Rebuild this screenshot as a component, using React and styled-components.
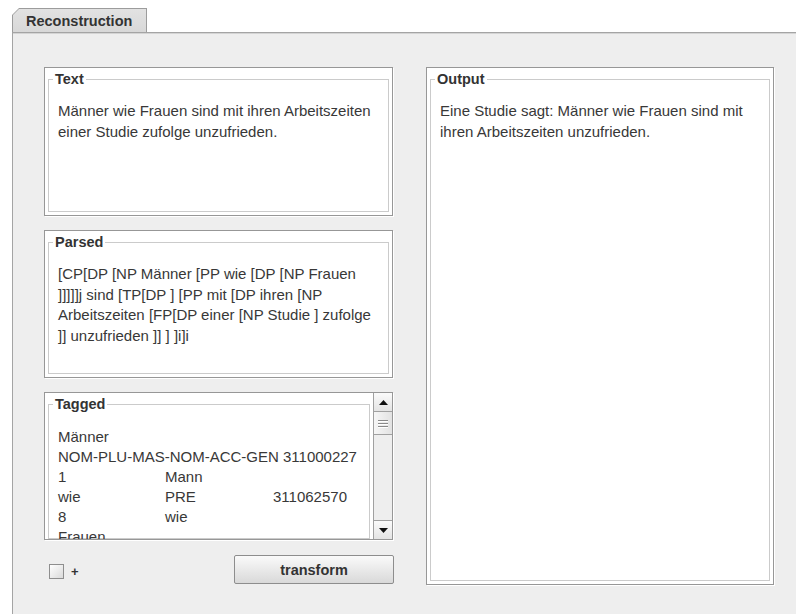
import React from "react";
import styled, { createGlobalStyle } from "styled-components";

const Global = createGlobalStyle`
  html, body { margin: 0; padding: 0; background: #ffffff; }
  body { font-family: "Liberation Sans", Arial, sans-serif; color: #333; }
  * { box-sizing: border-box; }
`;

const Window = styled.div`
  width: 796px;
  height: 614px;
  display: flex;
  flex-direction: column;
  overflow: hidden;
`;

const TabStrip = styled.div`
  height: 32px;
  display: flex;
  align-items: flex-end;
  padding-left: 12px;
`;

/* outer layer paints the tab outline, inner layer the fill; both share the chamfered corner */
const TabEdge = styled.div`
  width: 135px;
  height: 24px;
  background: #9c9c9c;
  clip-path: polygon(0 7px, 7px 0, 100% 0, 100% 100%, 0 100%);
  padding: 1px 1px 0 1px;
`;

const TabFace = styled.div`
  height: 100%;
  background: linear-gradient(#e2e2e2, #d8d8d8);
  clip-path: polygon(0 6px, 6px 0, 100% 0, 100% 100%, 0 100%);
  display: flex;
  align-items: center;
  padding-left: 13px;
  font-weight: bold;
  font-size: 14.5px;
  color: #333;
`;

const Panel = styled.div`
  flex: 1;
  margin-left: 12px;
  background: #eeeeee;
  border-top: 1px solid #a4a4a4;
  border-left: 1px solid #a4a4a4;
  box-shadow: inset 0 1px 0 #d4d4d4;
  padding: 34px 0 0 31px;
  display: flex;
  gap: 33px;
`;

const LeftColumn = styled.div`
  width: 349px;
  display: grid;
  grid-template-rows: 149px 148px 148px 29px;
  row-gap: 14px;
`;

const RightColumn = styled.div`
  width: 348px;
  height: 518px;
  display: flex;
`;

const Sunken = styled.div`
  flex: 1;
  min-width: 0;
  height: 100%;
  background: #fff;
  border: 1px solid #979797;
  box-shadow: 1px 1px 0 #ffffff;
  display: flex;
  overflow: hidden;
`;

const Group = styled.fieldset`
  flex: 1;
  min-width: 0;
  margin: 3px 3px ${(p) => (p.$open ? "0" : "3px")} 3px;
  border: 1px solid #cbcbcb;
  padding: 0 0 0 9px;
  align-self: stretch;
`;

const Caption = styled.legend`
  margin-left: -5px;
  padding: 0 2px;
  font-weight: bold;
  font-size: 14.5px;
  line-height: 16px;
  color: #333;
`;

const Body = styled.div`
  padding-top: ${(p) => (p.$tight ? "14.5px" : "14px")};
  font-size: 15px;
  line-height: ${(p) => (p.$tight ? "20px" : "20.5px")};
  color: #383838;
  white-space: nowrap;
`;

const Line = styled.div``;

const Viewport = styled.div`
  flex: 1;
  min-width: 0;
  overflow: hidden;
  display: flex;
`;

const Cols = styled.div`
  display: grid;
  grid-template-columns: 107px 108px auto;
`;

const ScrollBar = styled.div`
  width: 19px;
  border-left: 1px solid #a0a0a0;
  display: flex;
  flex-direction: column;
  background: #eeeeee;
`;

const ArrowButton = styled.div`
  height: 19px;
  display: flex;
  align-items: center;
  justify-content: center;
  background: linear-gradient(#fbfbfb, #e4e4e4);
  border-bottom: ${(p) => (p.$down ? "none" : "1px solid #a0a0a0")};
  border-top: ${(p) => (p.$down ? "1px solid #a0a0a0" : "none")};
`;

const Thumb = styled.div`
  height: 23px;
  border-bottom: 1px solid #a0a0a0;
  background: linear-gradient(90deg, #f6f6f6, #e2e2e2);
  display: flex;
  flex-direction: column;
  align-items: center;
  justify-content: center;
  gap: 2px;
`;

const Grip = styled.span`
  width: 10px;
  height: 1px;
  background: #8a8a8a;
  box-shadow: 0 1px 0 #ffffff;
`;

const Track = styled.div`
  flex: 1;
  background: #eeeeee;
`;

const ActionRow = styled.div`
  margin-top: 2px;
  display: flex;
  align-items: center;
  justify-content: space-between;
`;

const CheckLabel = styled.label`
  display: flex;
  align-items: center;
  margin-left: 5px;
  margin-top: 3px;
  font-weight: bold;
  font-size: 13px;
  color: #333;
`;

const CheckBox = styled.span`
  width: 15px;
  height: 15px;
  border: 1px solid #8e8e8e;
  background: linear-gradient(135deg, #ffffff, #dadada);
  margin-right: 7px;
`;

const Button = styled.button`
  width: 160px;
  height: 29px;
  margin-right: -1px;
  border: 1px solid #8d8d8d;
  border-radius: 2px;
  background: linear-gradient(#fafafa, #e6e6e6 60%, #d9d9d9);
  font-family: "Liberation Sans", Arial, sans-serif;
  font-weight: bold;
  font-size: 14.5px;
  color: #333;
  padding: 0;
`;

const Arrow = ({ down }) => (
  <svg width="9" height="5" viewBox="0 0 9 5">
    {down ? <polygon points="0,0 9,0 4.5,5" fill="#111" /> : <polygon points="0,5 9,5 4.5,0" fill="#111" />}
  </svg>
);

const TextGroup = ({ title, lines }) => (
  <Sunken>
    <Group>
      <Caption>{title}</Caption>
      <Body>
        {lines.map((l, i) => (
          <Line key={i}>{l}</Line>
        ))}
      </Body>
    </Group>
  </Sunken>
);

const tagged = [
  ["1", "Mann", ""],
  ["wie", "PRE", "311062570"],
  ["8", "wie", ""],
];

export default function App() {
  return (
    <>
      <Global />
      <Window>
        <TabStrip>
          <TabEdge>
            <TabFace>Reconstruction</TabFace>
          </TabEdge>
        </TabStrip>
        <Panel>
          <LeftColumn>
            <TextGroup
              title="Text"
              lines={["Männer wie Frauen sind mit ihren Arbeitszeiten", "einer Studie zufolge unzufrieden."]}
            />
            <TextGroup
              title="Parsed"
              lines={[
                "[CP[DP [NP Männer [PP wie [DP [NP Frauen",
                "]]]]]j sind [TP[DP ] [PP mit [DP ihren [NP",
                "Arbeitszeiten [FP[DP einer [NP Studie ] zufolge",
                "]] unzufrieden ]] ] ]i]i",
              ]}
            />
            <Sunken>
              <Viewport>
                <Group $open>
                  <Caption>Tagged</Caption>
                  <Body $tight>
                    <Line>Männer</Line>
                    <Line>NOM-PLU-MAS-NOM-ACC-GEN 311000227</Line>
                    {tagged.map((row, i) => (
                      <Cols key={i}>
                        {row.map((c, j) => (
                          <span key={j}>{c}</span>
                        ))}
                      </Cols>
                    ))}
                    <Line>Frauen</Line>
                  </Body>
                </Group>
              </Viewport>
              <ScrollBar>
                <ArrowButton>
                  <Arrow />
                </ArrowButton>
                <Thumb>
                  <Grip />
                  <Grip />
                  <Grip />
                </Thumb>
                <Track />
                <ArrowButton $down>
                  <Arrow down />
                </ArrowButton>
              </ScrollBar>
            </Sunken>
            <ActionRow>
              <CheckLabel>
                <CheckBox />+
              </CheckLabel>
              <Button>transform</Button>
            </ActionRow>
          </LeftColumn>
          <RightColumn>
            <TextGroup
              title="Output"
              lines={["Eine Studie sagt: Männer wie Frauen sind mit", "ihren Arbeitszeiten unzufrieden."]}
            />
          </RightColumn>
        </Panel>
      </Window>
    </>
  );
}
